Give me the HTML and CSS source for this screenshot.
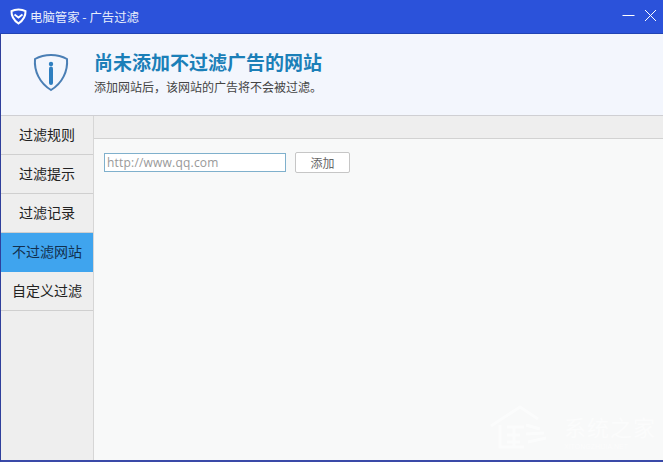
FILE: index.html
```html
<!DOCTYPE html>
<html lang="zh-CN">
<head>
  <meta charset="UTF-8">
  <title>电脑管家 - 广告过滤</title>
  <link rel="stylesheet" href="styles.css">
</head>
<body>
  <div class="window">
    <div class="titlebar">
      <svg class="logo" width="17" height="17" viewBox="0 0 17 17">
        <path d="M8.500 1.500C6 1.500 3.500 2 1.500 3.200C1.300 7.500 3.500 12 8.500 15.500C13.500 12 15.700 7.500 15.500 3.200C13.500 2 11 1.500 8.500 1.500Z" fill="none" stroke="#fff" stroke-width="2"/>
        <path d="M4.500 6.500L8.500 9.500L12.500 6.500" fill="none" stroke="#fff" stroke-width="1.800"/>
      </svg>
      <span class="title">电脑管家 - 广告过滤</span>
      <div class="win-btns">
        <svg width="13" height="13" viewBox="0 0 13 13"><path d="M0.500 6.500H12.500" stroke="#fff" stroke-width="1"/></svg>
        <svg width="13" height="13" viewBox="0 0 13 13"><path d="M1 1L12 12M12 1L1 12" stroke="#fff" stroke-width="1"/></svg>
      </div>
    </div>
    <div class="header">
      <svg class="shield" width="36" height="39" viewBox="0 0 36 39">
        <path d="M18 2C12 2 6.500 3.500 2 6C1 18 6.500 30 18 37C29.500 30 35 18 34 6C29.500 3.500 24 2 18 2Z" fill="none" stroke="#4a7fb5" stroke-width="2"/>
        <circle cx="18" cy="11" r="2.200" fill="#2f7fc0"/>
        <path d="M18 15.500V30" stroke="#2f7fc0" stroke-width="4" stroke-linecap="round"/>
      </svg>
      <div class="header-text">
        <h1>尚未添加不过滤广告的网站</h1>
        <p>添加网站后，该网站的广告将不会被过滤。</p>
      </div>
    </div>
    <div class="main">
      <ul class="sidebar">
        <li>过滤规则</li>
        <li>过滤提示</li>
        <li>过滤记录</li>
        <li class="active">不过滤网站</li>
        <li>自定义过滤</li>
      </ul>
      <div class="content">
        <div class="subbar"></div>
        <div class="add-row">
          <input class="url-input" type="text" placeholder="http://www.qq.com">
          <button class="add-btn">添加</button>
        </div>
      </div>
    </div>
    <div class="watermark">
      <svg class="wm-house" width="66" height="44" viewBox="0 0 66 44">
        <path d="M1 21L30 2L48 14M10 20V42H34M17 22H34M17 30H30M17 37H30M24 22V42" fill="none" stroke="#fff" stroke-width="3"/>
        <path d="M36 20L50 24M36 29L54 28M38 37L56 33" fill="none" stroke="#fff" stroke-width="3"/>
      </svg>
      <div class="wm-text">
        <div class="wm-name">系统之家</div>
        <div class="wm-url">XITONGZHIJIA.NET</div>
      </div>
    </div>
  </div>
</body>
</html>
```

FILE: styles.css
```css
html, body {
  margin: 0;
  padding: 0;
}
body {
  width: 663px;
  height: 462px;
  overflow: hidden;
  font-family: "Noto Sans CJK SC", "Liberation Sans", sans-serif;
}
.window {
  position: relative;
  box-sizing: border-box;
  width: 663px;
  height: 462px;
  display: flex;
  flex-direction: column;
  border-left: 1px solid #2f3f9c;
  border-bottom: 2px solid #3a4aa8;
  background: #f8f9f9;
}
.titlebar {
  height: 33px;
  flex: none;
  display: flex;
  align-items: center;
  padding-left: 10px;
  background: #2b52da;
  border-bottom: 1px solid #2143b4;
  color: #e8eefc;
  margin-left: -1px;
}
.logo {
  margin-right: 3px;
}
.title {
  font-size: 12.400px;
}
.win-btns {
  margin-left: auto;
  display: flex;
  gap: 9px;
  padding-right: 6px;
  margin-top: -3px;
}
.header {
  box-sizing: border-box;
  height: 82px;
  flex: none;
  display: flex;
  align-items: center;
  padding-bottom: 5px;
  background: #f3f6fd;
  border-bottom: 1px solid #cfcfd3;
}
.shield {
  margin-left: 32px;
  margin-right: 25px;
}
.header-text h1 {
  margin: 0;
  font-size: 19px;
  line-height: 26px;
  font-weight: 700;
  color: #1b7fb8;
}
.header-text p {
  margin: 3px 0 0;
  font-size: 12px;
  line-height: 17px;
  color: #444;
}
.main {
  flex: 1;
  display: flex;
  min-height: 0;
}
.sidebar {
  width: 92px;
  flex: none;
  margin: 0;
  padding: 0;
  list-style: none;
  background: #eeeeee;
  border-right: 1px solid #d6d6d6;
}
.sidebar li {
  box-sizing: border-box;
  height: 39px;
  line-height: 36px;
  text-align: center;
  font-size: 14px;
  color: #222;
  border-bottom: 1px solid #cfcfcf;
}
.sidebar li.active {
  background: #3fa4ee;
  border-bottom-color: #3fa4ee;
  color: #12304f;
}
.content {
  flex: 1;
  min-width: 0;
}
.subbar {
  height: 22px;
  background: #eeeeee;
  border-bottom: 1px solid #d2d2d2;
}
.add-row {
  display: flex;
  align-items: center;
  padding: 13px 0 0 10px;
}
.url-input {
  box-sizing: border-box;
  width: 182px;
  height: 19px;
  padding: 0 2px;
  border: 1px solid #7fb0cc;
  background: #fff;
  font-family: "Open Sans", "Liberation Sans", sans-serif;
  font-size: 12px;
  letter-spacing: 0.200px;
  outline: none;
}
.url-input::placeholder {
  color: #999;
  opacity: 1;
}
.add-btn {
  box-sizing: border-box;
  width: 55px;
  height: 21px;
  margin-left: 9px;
  padding: 0;
  background: #fff;
  border: 1px solid #c6c6c6;
  border-radius: 2px;
  font-family: "Noto Sans CJK SC", sans-serif;
  font-size: 12px;
  color: #666;
}
/* faint site stamp in the corner */
.watermark {
  position: absolute;
  right: 7px;
  bottom: 8px;
  display: flex;
  align-items: flex-start;
  gap: 8px;
  opacity: 0.550;
  color: #fff;
}
.wm-text {
  padding-top: 8px;
}
.wm-name {
  font-size: 22px;
  line-height: 26px;
  letter-spacing: 1px;
}
.wm-url {
  font-size: 7px;
  line-height: 10px;
  margin-top: 3px;
  font-family: "Liberation Sans", sans-serif;
}
```
